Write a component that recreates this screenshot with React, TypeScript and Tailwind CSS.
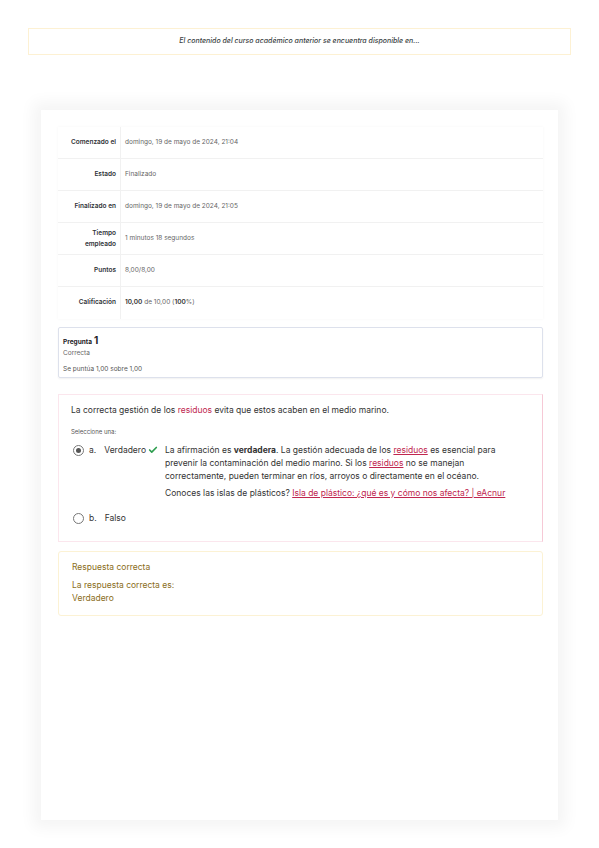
import { Check } from "lucide-react";

const rows = [
  { label: "Comenzado el", value: "domingo, 19 de mayo de 2024, 21:04" },
  { label: "Estado", value: "Finalizado" },
  { label: "Finalizado en", value: "domingo, 19 de mayo de 2024, 21:05" },
  { label: "Tiempo empleado", value: "1 minutos 18 segundos" },
  { label: "Puntos", value: "8,00/8,00" },
];

export default function App() {
  return (
    <main className="min-h-[848px] w-full bg-white px-[28px] pt-[28px] font-['Inter',sans-serif] text-[#1d2125]">
      {/* Banner */}
      <div className="flex h-[27px] items-center justify-center border border-[#fdf1d3] text-[7px] font-medium italic text-[#3a3f44]">
        El contenido del curso académico anterior se encuentra disponible en...
      </div>

      {/* Card */}
      <div className="mx-[13px] mt-[55px] h-[710px] bg-white px-[15px] pl-[17px] pt-[17px] shadow-[0_0_14px_8px_rgba(0,0,0,0.045)]">
        {/* Summary */}
        <div className="shadow-[0_0_3px_rgba(0,0,0,0.04)]">
          {rows.map((r) => (
            <div key={r.label} className="flex h-[32px] border-b border-[#f1f1f1]">
              <div className="flex w-[63px] shrink-0 items-center justify-end border-r border-[#f1f1f1] pr-[4px] text-right text-[6.5px] font-semibold leading-[11px] text-[#2f3337]">
                {r.label === "Tiempo empleado" ? (
                  <span>
                    Tiempo
                    <br />
                    empleado
                  </span>
                ) : (
                  r.label
                )}
              </div>
              <div className="flex items-center pl-[4px] text-[6.5px] text-[#666]">{r.value}</div>
            </div>
          ))}
          <div className="flex h-[32px]">
            <div className="flex w-[63px] shrink-0 items-center justify-end border-r border-[#f1f1f1] pr-[4px] text-[6.5px] font-semibold text-[#2f3337]">
              Calificación
            </div>
            <div className="flex items-center pl-[4px] text-[6.5px] text-[#666]">
              <span className="font-semibold text-[#333]">10,00</span>&nbsp;de 10,00 (
              <span className="font-semibold text-[#333]">100</span>%)
            </div>
          </div>
        </div>

        {/* Question info */}
        <div className="mt-[8px] h-[51px] rounded-[2px] border border-[#dde1ec] pl-[4px] pt-[5px] shadow-[0_1px_2px_rgba(0,0,0,0.06)]">
          <div className="flex items-baseline gap-[2px] text-[6.5px] font-bold text-[#1d2125]">
            Pregunta <span className="text-[10px]">1</span>
          </div>
          <div className="mt-[1px] text-[6.5px] text-[#666]">Correcta</div>
          <div className="mt-[6px] text-[6.5px] text-[#555]">Se puntúa 1,00 sobre 1,00</div>
        </div>

        {/* Question content */}
        <div className="mt-[16px] h-[148px] border border-[#fbe6ed] border-r-[#f6c9d6] px-[12px] pt-[9px]">
          <p className="text-[8.5px] text-[#333]">
            La correcta gestión de los <span className="text-[#c0264f]">residuos</span> evita que estos acaben en el medio marino.
          </p>
          <p className="mt-[10px] text-[6px] text-[#555]">Seleccione una:</p>
          <div className="mt-[8px] flex pl-[2px] text-[8.5px] text-[#333]">
            <div className="flex h-[13px] w-[92px] shrink-0 items-center">
              <span className="flex h-[11px] w-[11px] items-center justify-center rounded-full border border-[#777]">
                <span className="h-[5px] w-[5px] rounded-full bg-[#555]" />
              </span>
              <span className="ml-[5px]">a.</span>
              <span className="ml-[8px]">Verdadero</span>
              <Check className="ml-[2px] h-[10px] w-[10px] text-[#2e9e4f]" strokeWidth={4} />
            </div>
            <div className="w-[334px] leading-[13px]">
              <p>
                La afirmación es <b>verdadera</b>. La gestión adecuada de los{" "}
                <span className="text-[#c0264f] underline">residuos</span> es esencial para prevenir la
                contaminación del medio marino. Si los <span className="text-[#c0264f] underline">residuos</span> no se
                manejan correctamente, pueden terminar en ríos, arroyos o directamente en el océano.
              </p>
              <p className="mt-[4px] whitespace-nowrap">
                Conoces las islas de plásticos?{" "}
                <span className="text-[#c0264f] underline">Isla de plástico: ¿qué es y cómo nos afecta? | eAcnur</span>
              </p>
            </div>
          </div>
          <div className="mt-[12px] flex h-[13px] items-center pl-[2px] text-[8.5px] text-[#333]">
            <span className="h-[11px] w-[11px] rounded-full border border-[#777]" />
            <span className="ml-[5px]">b.</span>
            <span className="ml-[8px]">Falso</span>
          </div>
        </div>

        {/* Answer */}
        <div className="mt-[9px] h-[65px] rounded-[3px] border border-[#fcf2d4] pl-[13px] pt-[9px] text-[8.5px] text-[#8a6d1a]">
          <p>Respuesta correcta</p>
          <p className="mt-[5px]">La respuesta correcta es:</p>
          <p>Verdadero</p>
        </div>
      </div>
    </main>
  );
}
